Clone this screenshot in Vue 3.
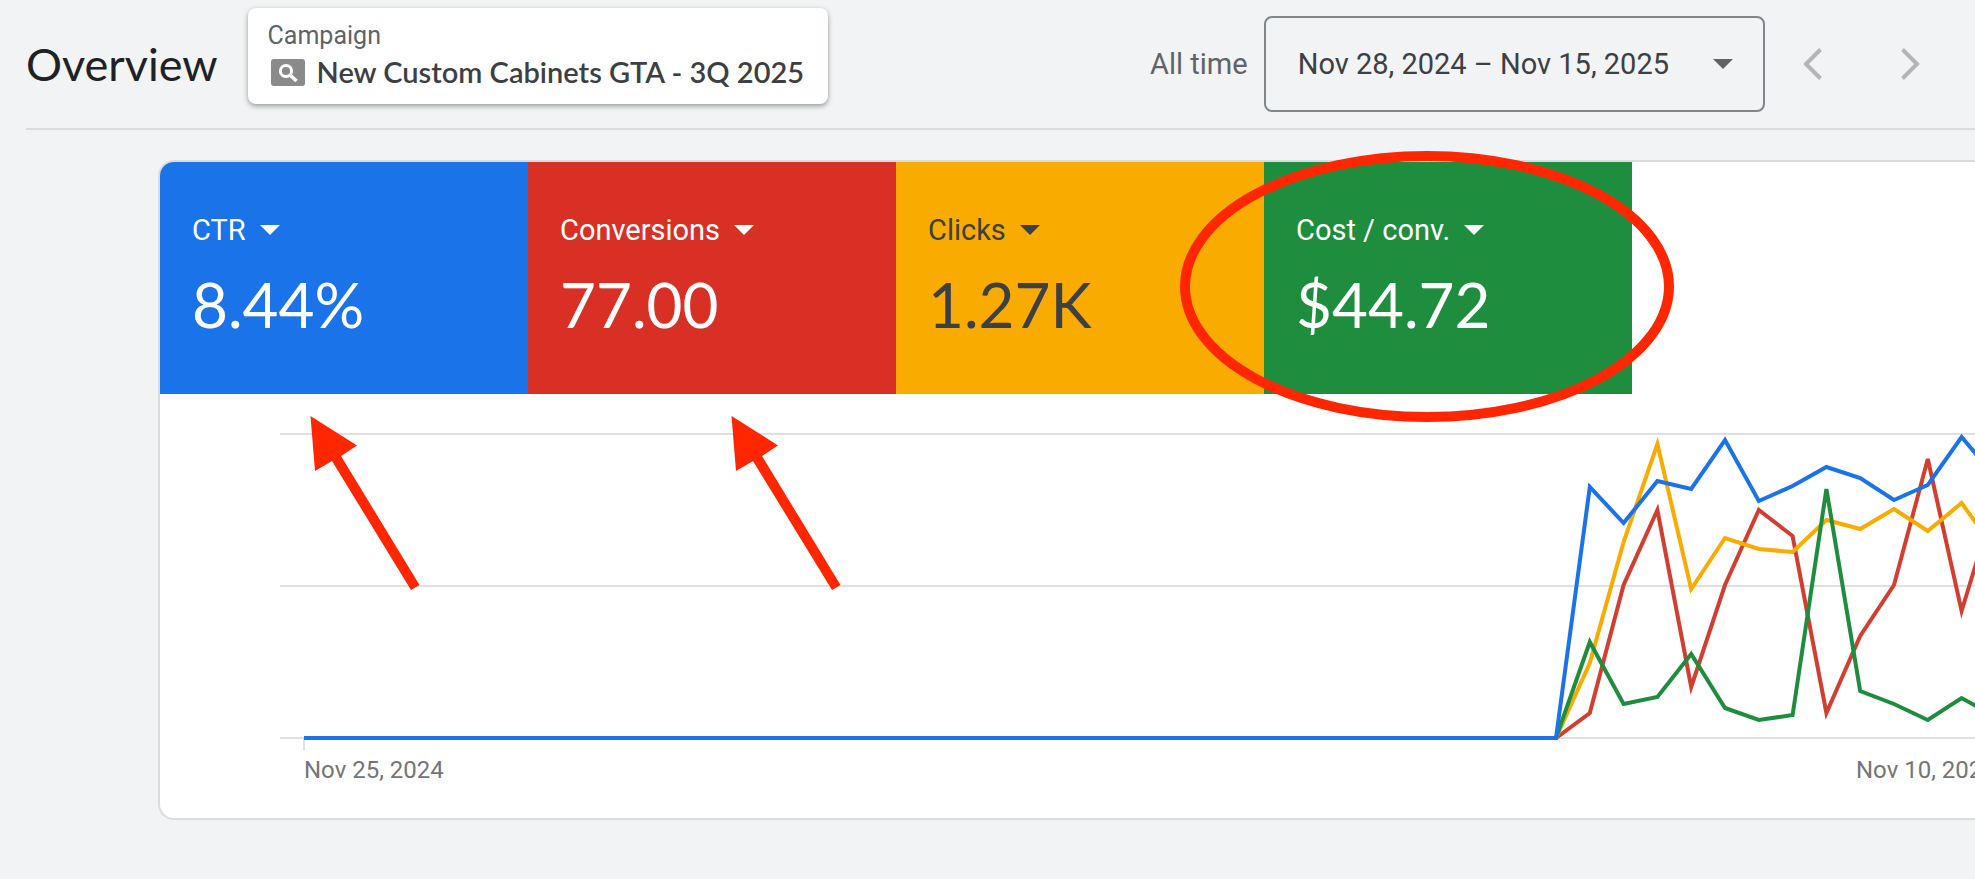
<script setup>
const metrics = [
  { label: 'CTR', value: '8.44%', tone: 'blue' },
  { label: 'Conversions', value: '77.00', tone: 'red' },
  { label: 'Clicks', value: '1.27K', tone: 'yellow' },
  { label: 'Cost / conv.', value: '$44.72', tone: 'green' },
]

// Chart geometry, in viewBox units
const baseline = 344
const chartStart = 144
const riseStart = 1396
const step = 33.8

const series = [
  { name: 'red', heights: [0, 25, 153, 228, 51, 153, 228, 202, 25, 102, 153, 279, 127, 238] },
  { name: 'yellow', heights: [0, 75, 196, 294, 149, 200, 189, 186, 218, 209, 229, 207, 235, 188] },
  { name: 'green', heights: [0, 96, 34, 41, 84, 30, 18, 23, 249, 47, 34, 18, 40, 21] },
  { name: 'blue', heights: [0, 251, 215, 257, 249, 298, 237, 252, 271, 260, 238, 253, 301, 261] },
]

const toPoints = (heights) =>
  [`${chartStart},${baseline}`]
    .concat(heights.map((h, i) => `${(riseStart + i * step).toFixed(1)},${baseline - h}`))
    .join(' ')
</script>

<template>
  <div class="page">
    <header class="topbar">
      <h1 class="title">Overview</h1>
      <section class="campaign">
        <span class="campaign-label">Campaign</span>
        <span class="campaign-name">
          <svg class="campaign-icon" viewBox="0 0 34 27" aria-hidden="true">
            <rect width="34" height="27" rx="3" fill="#8a8a8a" />
            <circle cx="15" cy="12" r="5.6" fill="none" stroke="#fff" stroke-width="3" />
            <path d="M19 16l6.500 6" stroke="#fff" stroke-width="3.600" />
          </svg>
          New Custom Cabinets GTA - 3Q 2025
        </span>
      </section>
      <div class="range">
        <span class="range-label">All time</span>
        <button class="range-button" type="button">
          Nov 28, 2024 – Nov 15, 2025
          <svg class="caret" viewBox="0 0 20 10" aria-hidden="true"><path d="M0 0h20L10 10z" /></svg>
        </button>
        <button class="step" type="button" aria-label="Previous period">
          <svg viewBox="0 0 20 32" aria-hidden="true"><path d="M17.500 1.500L3 16l14.500 14.500" /></svg>
        </button>
        <button class="step" type="button" aria-label="Next period">
          <svg viewBox="0 0 20 32" aria-hidden="true"><path d="M2.500 1.500L17 16L2.500 30.500" /></svg>
        </button>
      </div>
    </header>

    <main class="card">
      <div class="metrics">
        <button v-for="m in metrics" :key="m.label" type="button" class="metric" :class="m.tone">
          <span class="metric-label">
            {{ m.label }}
            <svg class="caret" viewBox="0 0 20 10" aria-hidden="true"><path d="M0 0h20L10 10z" /></svg>
          </span>
          <span class="metric-value">{{ m.value }}</span>
        </button>
      </div>

      <svg class="chart" viewBox="0 0 1815 424" role="img" aria-label="Performance over time">
        <g class="grid">
          <path d="M120 40H1815M120 192H1815M120 344H1815" />
          <path d="M144 344V356" />
        </g>
        <polyline
          v-for="s in series"
          :key="s.name"
          class="line"
          :class="s.name"
          :points="toPoints(s.heights)"
        />
        <text x="144" y="384">Nov 25, 2024</text>
        <text x="1696" y="384">Nov 10, 2025</text>
      </svg>

      <svg class="marks" viewBox="0 0 1815 656" aria-hidden="true">
        <ellipse cx="1267" cy="124.500" rx="242" ry="130.500" />
        <g id="arrow">
          <path d="M150.500 254L197 283.500L181 294L259.500 423L251 428L172 299L155 309z" />
        </g>
        <use href="#arrow" x="421" />
      </svg>
    </main>
  </div>
</template>

<style>
body {
  background: #f1f3f4;
}
</style>

<style scoped>
.page {
  min-height: 100vh;
  overflow: hidden;
  background: #f1f3f4;
  color: #3c4043;
  font-family: Roboto, "Liberation Sans", sans-serif;
  font-size: 29px;
  line-height: 36px;
}

button {
  margin: 0;
  border: 0;
  background: none;
  color: inherit;
  font: inherit;
  text-align: left;
  cursor: pointer;
}

.topbar {
  display: flex;
  align-items: center;
  height: 128px;
  margin-left: 26px;
  border-bottom: 2px solid #dadce0;
}

.title {
  margin: 0;
  color: #202124;
  font-family: Lato, "Liberation Sans", sans-serif;
  font-size: 45px;
  font-weight: 400;
  line-height: 56px;
}

.campaign {
  display: flex;
  flex-direction: column;
  box-sizing: border-box;
  height: 96px;
  margin: 0 0 16px 30px;
  padding: 10px 24px 10px 20px;
  border-radius: 8px;
  background: #fff;
  box-shadow: 0 2px 5px rgba(60, 64, 67, 0.5);
  white-space: nowrap;
}

.campaign-label {
  color: #5f6368;
  font-size: 25px;
}

.campaign-name {
  display: flex;
  align-items: center;
  gap: 12px;
  font-family: Lato, "Liberation Sans", sans-serif;
  font-weight: 600;
}

.campaign-icon {
  width: 34px;
  height: 27px;
  margin-left: 3px;
}

.range {
  display: flex;
  align-items: center;
  margin-left: auto;
  padding-right: 55px;
  white-space: nowrap;
}

.range-label {
  margin-right: 16px;
  color: #5f6368;
}

.range-button {
  display: flex;
  align-items: center;
  gap: 44px;
  height: 96px;
  margin-right: 38px;
  padding: 0 30px 0 32px;
  border: 2px solid #80868b;
  border-radius: 8px;
}

.caret {
  width: 20px;
  height: 10px;
  fill: currentColor;
}

.range-button .caret {
  color: #5f6368;
}

.step {
  display: flex;
  padding: 0;
}

.step + .step {
  margin-left: 77px;
}

.step svg {
  width: 20px;
  height: 32px;
  fill: none;
  stroke: #b4b5b7;
  stroke-width: 4;
}

.card {
  position: relative;
  margin: 30px 0 0 158px;
  border: 2px solid #dadce0;
  border-right: 0;
  border-radius: 16px 0 0 16px;
  background: #fff;
}

.metrics {
  display: grid;
  grid-template-columns: repeat(4, minmax(0, 368px));
}

.metric {
  display: flex;
  flex-direction: column;
  gap: 16px;
  height: 232px;
  padding: 50px 32px 48px;
  color: #fff;
}

.metric:first-child {
  border-top-left-radius: 14px;
}

.metric.blue {
  background: #1a73e8;
}

.metric.red {
  background: #d93025;
}

.metric.yellow {
  background: #f9ab00;
  color: #3c4043;
}

.metric.green {
  background: #1e8e3e;
}

.metric-label {
  display: flex;
  align-items: center;
  gap: 14px;
}

.metric-value {
  font-family: Lato, "Liberation Sans", sans-serif;
  font-size: 62px;
  line-height: 80px;
}

.chart {
  display: block;
  width: 100%;
}

.chart text {
  fill: #757575;
  font-size: 24px;
}

.grid path {
  stroke: #e0e0e0;
  stroke-width: 2;
}

.line {
  fill: none;
  stroke-width: 4;
}

.line.red {
  stroke: #d23f31;
}

.line.yellow {
  stroke: #f9ab00;
}

.line.green {
  stroke: #1e8e3e;
}

.line.blue {
  stroke: #1a73e8;
}

.marks {
  position: absolute;
  top: 0;
  left: 0;
  width: 100%;
  overflow: visible;
  fill: #ff2600;
  pointer-events: none;
}

.marks ellipse {
  fill: none;
  stroke: #ff2600;
  stroke-width: 10;
}
</style>
